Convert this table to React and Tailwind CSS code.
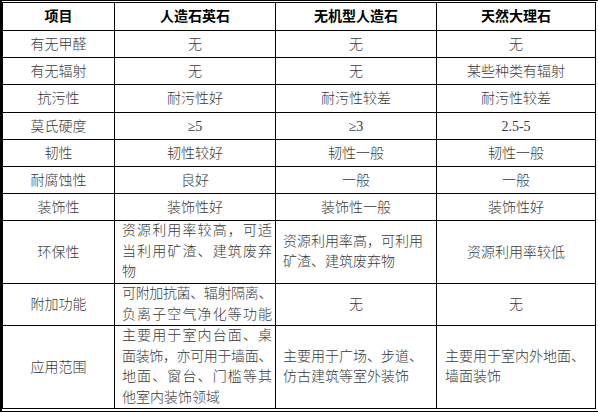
const rows = [
  { h: 'h-[26px]', cells: ['有无甲醛', '无', '无', '无'] },
  { h: 'h-[26px]', cells: ['有无辐射', '无', '无', '某些种类有辐射'] },
  { h: 'h-[27px]', cells: ['抗污性', '耐污性好', '耐污性较差', '耐污性较差'] },
  { h: 'h-[26px]', cells: ['莫氏硬度', '≥5', '≥3', '2.5-5'] },
  { h: 'h-[26px]', cells: ['韧性', '韧性较好', '韧性一般', '韧性一般'] },
  { h: 'h-[26px]', cells: ['耐腐蚀性', '良好', '一般', '一般'] },
  { h: 'h-[26px]', cells: ['装饰性', '装饰性好', '装饰性一般', '装饰性好'] },
  {
    h: 'h-[62px]',
    cells: [
      '环保性',
      { lines: ['资源利用率较高，可适', '当利用矿渣、建筑废弃', '物'], fill: [true, true, false] },
      { lines: ['资源利用率高，可利用', '矿渣、建筑废弃物'] },
      '资源利用率较低',
    ],
  },
  {
    h: 'h-[41px]',
    cells: [
      '附加功能',
      { lines: ['可附加抗菌、辐射隔离、', '负离子空气净化等功能'], fill: [true, true] },
      '无',
      '无',
    ],
  },
  {
    h: 'h-[82px]',
    cells: [
      '应用范围',
      {
        lines: ['主要用于室内台面、桌', '面装饰，亦可用于墙面、', '地面、窗台、门槛等其', '他室内装饰领域'],
        fill: [true, true, true, false],
      },
      { lines: ['主要用于广场、步道、', '仿古建筑等室外装饰'] },
      { lines: ['主要用于室内外地面、', '墙面装饰'] },
    ],
  },
];

const padLeft = ['pl-[7px]', 'pl-[7px]', 'pl-[7px]', 'pl-[8px]'];

function Cell({ value, col }) {
  if (typeof value === 'string') {
    return (
      <div className="bg-white flex items-center justify-center text-[#3a3a3a] font-light whitespace-nowrap">
        {value}
      </div>
    );
  }
  return (
    <div className={`bg-white flex flex-col justify-center ${padLeft[col]} pr-[3px] text-[#3a3a3a] font-light`}>
      {value.lines.map((line, i) => {
        const fill = value.fill && value.fill[i];
        const tight = line.length > 10;
        return (
          <div
            key={i}
            className={`whitespace-nowrap leading-[20.5px] ${
              fill ? 'text-justify [text-align-last:justify]' : 'text-left'
            } ${tight ? 'tracking-[-0.4px]' : ''}`}
          >
            {line}
          </div>
        );
      })}
    </div>
  );
}

export default function App() {
  return (
    <div className="w-[598px] h-[412px] bg-white border-t border-b border-l-2 border-black pt-px pb-[2px] pr-[2px] font-['Liberation_Serif','Noto_Sans_CJK_SC',serif] text-[14px]">
      <div className="grid grid-cols-[111px_160px_160px_158px] gap-px bg-black p-px">
        {/* header */}
        {['项目', '人造石英石', '无机型人造石', '天然大理石'].map((t) => (
          <div key={t} className="h-[27px] bg-white flex items-center justify-center font-bold text-black">
            {t}
          </div>
        ))}

        {rows.map((row, r) =>
          row.cells.map((c, i) => (
            <div key={`${r}-${i}`} className={`${row.h} grid`}>
              <Cell value={c} col={i} />
            </div>
          ))
        )}
      </div>
    </div>
  );
}
